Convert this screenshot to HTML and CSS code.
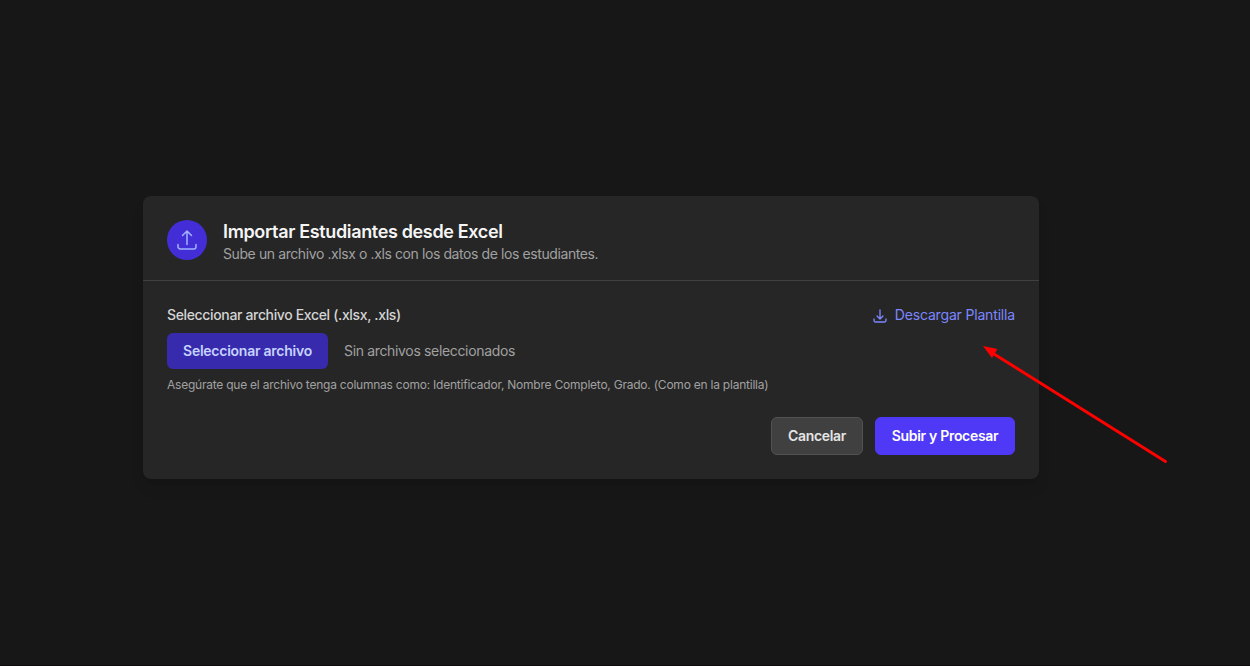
FILE: index.html
```html
<!DOCTYPE html>
<html lang="es">
<head>
<meta charset="utf-8">
<title>Importar Estudiantes</title>
<link rel="stylesheet" href="styles.css">
</head>
<body>
<main class="card">
  <header class="card-header">
    <span class="badge">
      <svg width="24" height="24" viewBox="0 0 24 24" fill="none" stroke="currentColor" stroke-width="1.5" stroke-linecap="round" stroke-linejoin="round"><path d="M3 16.5v2.25A2.25 2.25 0 0 0 5.25 21h13.5A2.25 2.25 0 0 0 21 18.75V16.5m-13.5-9L12 3m0 0 4.5 4.5M12 3v13.5"/></svg>
    </span>
    <div class="heading">
      <h1 class="title">Importar Estudiantes desde Excel</h1>
      <p class="subtitle">Sube un archivo .xlsx o .xls con los datos de los estudiantes.</p>
    </div>
  </header>
  <form class="card-body">
    <div class="label-row">
      <label class="label">Seleccionar archivo Excel (.xlsx, .xls)</label>
      <a class="download">
        <svg class="download-icon" width="16" height="16" viewBox="0 0 24 24" fill="none" stroke="currentColor" stroke-width="2" stroke-linecap="round" stroke-linejoin="round"><path d="M3 16.5v2.25A2.25 2.25 0 0 0 5.25 21h13.5A2.25 2.25 0 0 0 21 18.75V16.5M16.5 12 12 16.5m0 0L7.5 12m4.5 4.5V3"/></svg>
        <span class="download-text">Descargar Plantilla</span>
      </a>
    </div>
    <div class="file-row">
      <button type="button" class="file-button"><span class="file-button-text">Seleccionar archivo</span></button>
      <span class="file-name">Sin archivos seleccionados</span>
    </div>
    <p class="hint">Asegúrate que el archivo tenga columnas como: Identificador, Nombre Completo, Grado. (Como en la plantilla)</p>
    <div class="actions">
      <button type="button" class="button cancel"><span class="cancel-text">Cancelar</span></button>
      <button type="button" class="button submit"><span class="submit-text">Subir y Procesar</span></button>
    </div>
  </form>
</main>
<svg class="arrow" width="190" height="124" viewBox="0 0 190 124"><path d="M14 11 185.500 118.500" stroke="#f00" stroke-width="3" stroke-linecap="round"/><path d="M3 3 17.500 6 12 15Z" fill="#f00"/></svg>
</body>
</html>
```
FILE: styles.css
```css
* { box-sizing: border-box; }
body {
  margin: 0;
  height: 666px;
  padding: 196px 0 0 143px;
  overflow: hidden;
  background: #171717;
  font-family: Inter, "Liberation Sans", sans-serif;
  font-size: 14px;
  line-height: 20px;
  border-bottom: 1px solid #0d0a0c;
}
h1, p { margin: 0; }
svg { display: block; flex: none; }
.card {
  width: 896px;
  height: 283px;
  background: #262626;
  border-radius: 8px;
  box-shadow: 0 10px 15px -3px rgba(0, 0, 0, .1), 0 4px 6px -4px rgba(0, 0, 0, .1);
  white-space: nowrap;
}
.card-header {
  display: flex;
  gap: 16px;
  height: 85px;
  padding: 24px 24px 0;
  border-bottom: 1px solid #404040;
}
.badge {
  display: flex;
  align-items: center;
  justify-content: center;
  width: 40px;
  height: 40px;
  border-radius: 50%;
  background: #432dd7;
  color: #a3b3ff;
}
.title {
  font-size: 18px;
  line-height: 24px;
  font-weight: 600;
  letter-spacing: -0.35px;
  color: #f5f5f5;
}
.subtitle { letter-spacing: -0.405px; color: #a1a1a1; }
.card-body { padding: 24px; }
.label-row { display: flex; justify-content: space-between; height: 20px; }
.label { font-weight: 500; letter-spacing: -0.35px; color: #d4d4d4; }
.download { display: flex; align-items: center; gap: 7px; color: #7c86ff; }
.download-icon { margin-top: 2px; }
.download-text { letter-spacing: -0.17px; }
.file-row { display: flex; align-items: center; gap: 16px; margin-top: 8px; height: 36px; }
.file-button {
  display: flex;
  align-items: center;
  justify-content: center;
  width: 161px;
  height: 36px;
  padding: 0;
  border: 0;
  border-radius: 6px;
  background: #372aac;
  color: #c6d2ff;
  font: 600 14px/20px Inter, sans-serif;
}
.file-button-text { letter-spacing: -0.25px; }
.file-name { letter-spacing: -0.34px; color: #a1a1a1; }
.hint { margin-top: 8px; font-size: 12px; line-height: 16px; letter-spacing: -0.23px; color: #a1a1a1; }
.actions { display: flex; justify-content: flex-end; gap: 12px; margin-top: 24px; }
.button {
  display: flex;
  align-items: center;
  justify-content: center;
  height: 38px;
  padding: 0;
  border: 1px solid transparent;
  border-radius: 6px;
  font: 600 14px/20px Inter, sans-serif;
  letter-spacing: -0.3px;
}
.cancel { width: 92px; background: #404040; border-color: #525252; color: #e5e5e5; }
.submit { width: 140px; background: #4f39f6; border-color: #4f39f6; color: #fff; }
.arrow { position: absolute; left: 980px; top: 343px; }
```
